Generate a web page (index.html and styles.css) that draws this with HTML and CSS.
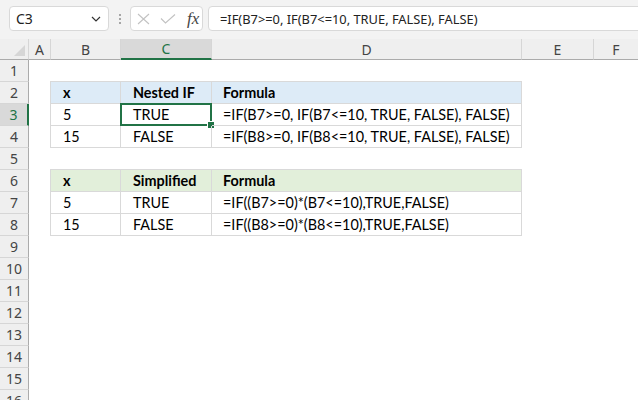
FILE: index.html
```html
<!DOCTYPE html>
<html lang="en">
<head>
<meta charset="utf-8">
<title>Nested IF</title>
<link rel="stylesheet" href="styles.css">
</head>
<body>
<div class="app">
  <div class="toolbar">
    <div class="namebox">
      <span class="ref">C3</span>
      <svg class="chev" width="10" height="6" viewBox="0 0 10 6"><path d="M1 1 L5 5 L9 1" fill="none" stroke="#333" stroke-width="1.2"/></svg>
    </div>
    <div class="dots"><i></i><i></i><i></i></div>
    <div class="fxbox">
      <svg class="ico" width="13" height="12" viewBox="0 0 13 12"><path d="M1 1 L12 11 M12 1 L1 11" fill="none" stroke="#c2c2c2" stroke-width="1.1"/></svg>
      <svg class="ico" width="16" height="10" viewBox="0 0 16 10"><path d="M1 4.5 L5.5 9 L15 0.5" fill="none" stroke="#c2c2c2" stroke-width="1.1"/></svg>
      <span class="fx">fx</span>
    </div>
    <div class="formula">=IF(B7&gt;=0, IF(B7&lt;=10, TRUE, FALSE), FALSE)</div>
  </div>

  <div class="colheads">
    <div class="ch corner"><svg width="11" height="11" viewBox="0 0 11 11"><path d="M11 0 L11 11 L0 11 Z" fill="#d6d6d6"/></svg></div>
    <div class="ch ca">A</div>
    <div class="ch cb">B</div>
    <div class="ch cc active">C</div>
    <div class="ch cd">D</div>
    <div class="ch ce">E</div>
    <div class="ch cf">F</div>
  </div>

  <div class="sheet">
    <div class="rowheads">
      <div class="rh">1</div>
      <div class="rh">2</div>
      <div class="rh active">3</div>
      <div class="rh">4</div>
      <div class="rh">5</div>
      <div class="rh">6</div>
      <div class="rh">7</div>
      <div class="rh">8</div>
      <div class="rh">9</div>
      <div class="rh">10</div>
      <div class="rh">11</div>
      <div class="rh">12</div>
      <div class="rh">13</div>
      <div class="rh">14</div>
      <div class="rh">15</div>
      <div class="rh">16</div>
    </div>
    <div class="canvas">
      <div class="tbl">
        <div class="c hd blue">x</div>
        <div class="c hd blue">Nested IF</div>
        <div class="c hd blue fcol">Formula</div>
        <div class="c">5</div>
        <div class="c selcell">TRUE<span class="sel"><span class="handle"></span></span></div>
        <div class="c fcol">=IF(B7&gt;=0, IF(B7&lt;=10, TRUE, FALSE), FALSE)</div>
        <div class="c">15</div>
        <div class="c">FALSE</div>
        <div class="c fcol">=IF(B8&gt;=0, IF(B8&lt;=10, TRUE, FALSE), FALSE)</div>
      </div>
      <div class="tbl">
        <div class="c hd green">x</div>
        <div class="c hd green">Simplified</div>
        <div class="c hd green fcol">Formula</div>
        <div class="c">5</div>
        <div class="c">TRUE</div>
        <div class="c fcol">=IF((B7&gt;=0)*(B7&lt;=10),TRUE,FALSE)</div>
        <div class="c">15</div>
        <div class="c">FALSE</div>
        <div class="c fcol">=IF((B8&gt;=0)*(B8&lt;=10),TRUE,FALSE)</div>
      </div>
    </div>
  </div>
</div>
</body>
</html>
```

FILE: styles.css
```css
* { box-sizing: border-box; }
html, body { margin: 0; padding: 0; }
body {
  width: 638px;
  height: 400px;
  overflow: hidden;
  background: #fff;
  font-family: "Noto Sans", "Open Sans", sans-serif;
}
.app { width: 638px; height: 400px; overflow: hidden; }

/* toolbar */
.toolbar {
  height: 39px;
  background: #f3f3f3;
  display: flex;
  align-items: flex-start;
  padding: 6px 0 0 9px;
}
.namebox {
  width: 100px;
  height: 25px;
  background: #fff;
  border: 1px solid #d9d9d9;
  border-radius: 4px;
  display: flex;
  align-items: center;
  justify-content: space-between;
  padding: 0 7px 0 6px;
  font-size: 14px;
  color: #222;
}
.dots {
  width: 21px;
  height: 25px;
  display: flex;
  flex-direction: column;
  align-items: center;
  justify-content: center;
  gap: 2px;
}
.dots i { display: block; width: 2px; height: 2px; background: #8c8c8c; border-radius: 1px; }
.fxbox {
  width: 73px;
  height: 25px;
  background: #fff;
  border: 1px solid #d9d9d9;
  border-radius: 4px;
  display: flex;
  align-items: center;
  padding: 0 0 0 6px;
  gap: 10px;
}
.fx {
  font-family: "Liberation Serif", "DejaVu Serif", serif;
  font-style: italic;
  font-size: 17px;
  color: #444;
  margin-left: 1px;
}
.formula {
  flex: 1;
  height: 25px;
  margin-left: 5px;
  margin-right: -10px;
  background: #fff;
  border: 1px solid #d9d9d9;
  border-radius: 4px;
  padding-left: 11px;
  display: flex;
  align-items: center;
  font-size: 12.85px;
  color: #222;
  white-space: nowrap;
}

/* column headers */
.colheads { display: flex; height: 21px; background: #efefef; }
.ch {
  height: 21px;
  border-right: 1px solid #d6d6d6;
  border-bottom: 1px solid #ababab;
  display: flex;
  align-items: center;
  justify-content: center;
  font-size: 14px;
  color: #444;
}
.ch.corner { width: 29px; align-items: flex-end; justify-content: flex-end; padding: 0 3px 3px 0; }
.ca { width: 22px; }
.cb { width: 70px; }
.cc { width: 91px; }
.cd { width: 310px; }
.ce { width: 72px; }
.cf { flex: 1; border-right: none; }
.ch.active { background: #d9d9d9; color: #217346; border-bottom: 2px solid #217346; }

/* sheet */
.sheet { display: flex; }
.rowheads { width: 29px; background: #efefef; }
.rh {
  height: 22px;
  border-right: 1px solid #ababab;
  border-bottom: 1px solid #d6d6d6;
  display: flex;
  align-items: center;
  justify-content: center;
  font-size: 14px;
  color: #444;
}
.rh.active { background: #d9d9d9; color: #217346; border-right: 2px solid #217346; }

.canvas { flex: 1; padding: 21px 0 0 21px; }
.tbl {
  display: grid;
  grid-template-columns: 70px 91px 310px;
  width: max-content;
  border-top: 1px solid #d9d9d9;
  border-left: 1px solid #d9d9d9;
  margin-bottom: 21px;
}
.c {
  position: relative;
  height: 22px;
  border-right: 1px solid #d9d9d9;
  border-bottom: 1px solid #d9d9d9;
  padding-left: 12px;
  display: flex;
  align-items: center;
  font-family: "Lato", "Liberation Sans", sans-serif;
  font-size: 14.4px;
  color: #000;
  white-space: nowrap;
}
.c.fcol { padding-left: 11px; }
.c.hd { font-weight: bold; }
.c.blue { background: #ddebf7; }
.c.green { background: #e2efda; }
.sel {
  position: absolute;
  left: -1px;
  top: -1px;
  right: -1px;
  bottom: -1px;
  border: 2px solid #217346;
}
.handle {
  position: absolute;
  right: -4px;
  bottom: -4px;
  width: 6px;
  height: 6px;
  background: #217346;
  outline: 1px solid #fff;
}
```
